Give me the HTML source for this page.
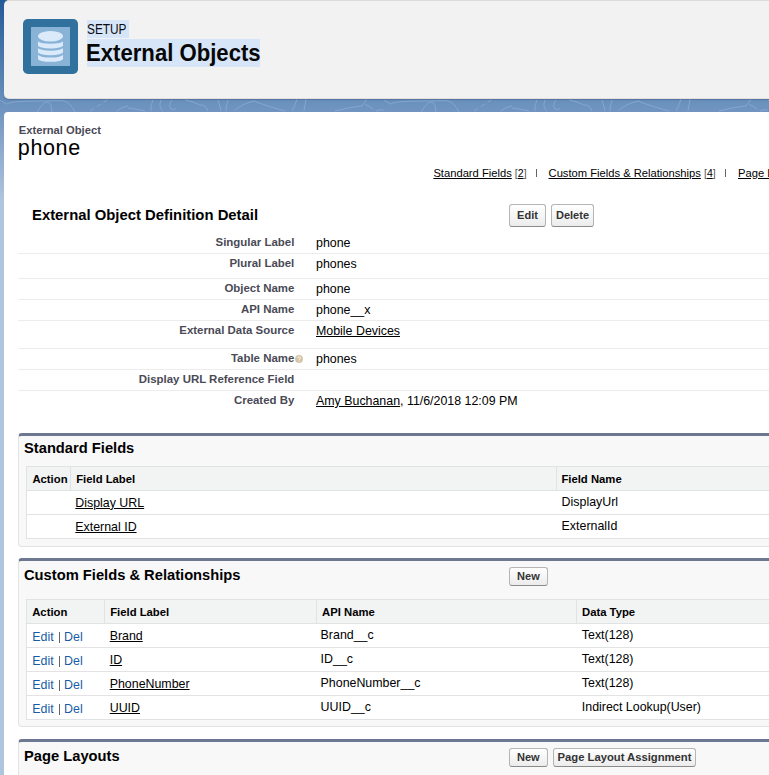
<!DOCTYPE html>
<html><head><meta charset="utf-8">
<style>
html,body{margin:0;padding:0;}
body{width:769px;height:775px;overflow:hidden;position:relative;font-family:"Liberation Sans",sans-serif;background:linear-gradient(180deg,#225a99 0px,#3366a0 22px,#4c7bad 62px,#6b91bd 104px,#8fabcf 152px,#afc4de 200px,#afc4de 775px);}
.a{position:absolute;white-space:nowrap;}
#hdr{position:absolute;left:4px;top:0;width:800px;height:98.5px;background:#f2f2f2;border-radius:5px;border-top:1px solid #dedbd9;border-bottom:1px solid #e2dfdc;box-sizing:border-box;box-shadow:0 1px 1px rgba(20,40,80,0.25);}
#card{position:absolute;left:4px;top:111.8px;width:800px;height:700px;background:#fff;border-radius:4px;}
.sel{position:absolute;background:#d6e5f7;}
.lbl{position:absolute;white-space:nowrap;font-weight:bold;font-size:11.45px;line-height:11.3px;color:#4a4a56;text-align:right;}
.val{position:absolute;white-space:nowrap;font-size:12.4px;line-height:12.4px;color:#000;left:316px;}
.sep{position:absolute;left:18px;width:760px;height:1px;background:#ececec;}
.btn{position:absolute;box-sizing:border-box;border:1px solid #b5b5b5;border-bottom-color:#8a8a8a;border-radius:3px;background:linear-gradient(#ffffff,#ececec);font-weight:bold;font-size:11px;color:#333;text-align:center;}
.box{position:absolute;left:18px;width:770px;box-sizing:border-box;background:#f8f8f8;border:1px solid #e3e3e3;border-top:3px solid #6c7791;border-radius:4px;}
.ttl{position:absolute;white-space:nowrap;font-weight:bold;font-size:16px;line-height:16px;color:#000;left:24.3px;transform:scale(0.919,0.96);transform-origin:0 0;}
.tbl{position:absolute;left:26px;width:760px;box-sizing:border-box;background:#fff;border:1px solid #e0e3e5;}
.th{position:absolute;left:0;right:0;background:#f2f3f3;border-bottom:1px solid #e0e3e5;}
.rl{position:absolute;left:0;right:0;height:1px;background:#e3e3e3;}
.cs{position:absolute;width:1px;background:#e0e3e5;}
.h{position:absolute;white-space:nowrap;font-weight:bold;font-size:11.3px;line-height:11.3px;color:#000;}
.d{position:absolute;white-space:nowrap;font-size:12.4px;line-height:12.4px;color:#000;}
.u{text-decoration:underline;}
.lk{color:#1a5ba6;}
.bar{color:#555;display:inline-block;width:1px;height:11px;background:#666;vertical-align:-1.8px;color:transparent;overflow:hidden;margin:0 0.6px 0 1.9px;}
.bar2{display:inline-block;width:1px;height:8.2px;background:#666;color:transparent;overflow:hidden;vertical-align:0;}
.br{color:#555;}
</style></head><body>
<svg class="a" style="left:0;top:97px" width="769" height="16"><defs><pattern id="tx" x="0" y="0" width="384" height="16" patternUnits="userSpaceOnUse"><g fill="none" stroke="#90b0d4" stroke-width="0.9" opacity="0.75">
<path d="M0,3.3 L6.7,7 Q10,5 20,4.5 T63,3.7 Q70,5 75,15"/><path d="M37.5,15 Q42,5 48,5 Q52,6 51.7,15"/><path d="M90,14 L108,2.5" stroke-dasharray="5 3"/><path d="M116.7,14 Q122,10 128,9"/>
<path d="M128,10.8 Q135,12 145,14"/><path d="M153,3 Q150,9 151,14"/><path d="M161,3 Q158,10 163,14"/><path d="M172,3 Q168,8 171,12 Q174,14 176,11"/><path d="M185,3 Q195,5 200,8 Q205,7 208,14"/><path d="M218,3 Q220,9 221,14"/><path d="M228,3 Q226,9 226,14"/><path d="M235,13 Q245,5 256,4"/>
<path d="M256,5 Q270,10 285,14"/><path d="M297,2 Q295,9 292,14"/><path d="M306,2 Q305,8 304,14"/><path d="M335,14 Q350,10 362,9 Q365,5 367,2"/><path d="M365,7 Q370,10 373,12"/><path d="M376,14 Q380,12 384,13"/>
</g></pattern></defs><rect width="769" height="16" fill="url(#tx)"/></svg>
<div id="hdr"></div>
<svg class="a" style="left:23px;top:19px" width="55" height="55" viewBox="23 19 55 55">
<rect x="23" y="19" width="55" height="55" rx="4.8" fill="#31719e"/>
<rect x="31" y="27" width="39" height="39" fill="#88b3d6"/>
<g fill="#dbeafa">
<path d="M38,41 A12.5,2.8 0 0 0 63,41 V45.2 A12.5,3.3 0 0 1 38,45.2 Z"/>
<path d="M38,47.8 A12.5,2.9 0 0 0 63,47.8 V52 A12.5,3.2 0 0 1 38,52 Z"/>
<path d="M38,54.6 A12.5,2.9 0 0 0 63,54.6 V58.8 A12.5,3 0 0 1 38,58.8 Z"/>
<ellipse cx="50.5" cy="36.2" rx="12.5" ry="5.2"/>
</g>
</svg>
<div class="sel" style="left:87px;top:20px;width:42px;height:18px"></div>
<div class="sel" style="left:87px;top:39px;width:173px;height:28px"></div>
<div class="a" style="left:86.5px;top:22.3px;font-size:14px;line-height:14px;color:#0a0a12;transform:scaleX(0.845);transform-origin:0 0">SETUP</div>
<div class="a" style="left:86.4px;top:40.9px;font-size:23.8px;line-height:23.8px;font-weight:bold;color:#080707;transform:scaleX(0.93);transform-origin:0 0">External Objects</div>

<div id="card"></div>
<div class="a" style="left:18.8px;top:125px;font-size:11.2px;line-height:11.2px;font-weight:bold;color:#4a4a56">External Object</div>
<div class="a" style="left:17.8px;top:137.6px;font-size:21.5px;line-height:21.5px;color:#000;letter-spacing:0.65px">phone</div>

<div class="a" style="left:433.4px;top:167.8px;font-size:11.2px;line-height:11.2px;color:#000"><span class="u">Standard Fields</span> <span style="font-size:10.5px"><span class="br">[</span><span class="u">2</span><span class="br">]</span></span><span style="display:inline-block;width:9px"></span><span class="bar2">|</span><span style="display:inline-block;width:12px"></span><span class="u">Custom Fields &amp; Relationships</span> <span style="font-size:10.5px"><span class="br">[</span><span class="u">4</span><span class="br">]</span></span><span style="display:inline-block;width:9px"></span><span class="bar2">|</span><span style="display:inline-block;width:12.3px"></span><span class="u">Page Layouts</span></div>

<div class="ttl" style="left:31.5px;top:207.9px;font-size:16px;transform:scale(0.928,0.96)">External Object Definition Detail</div>
<div class="btn" style="left:509px;top:204px;width:37px;height:23px;line-height:21px">Edit</div>
<div class="btn" style="left:551px;top:204px;width:43px;height:23px;line-height:21px">Delete</div>

<div class="lbl" style="right:474.7px;top:236.5px">Singular Label</div>
<div class="val" style="top:237.1px">phone</div>
<div class="sep" style="top:253px"></div>
<div class="lbl" style="right:474.7px;top:258px">Plural Label</div>
<div class="val" style="top:257.8px">phones</div>
<div class="sep" style="top:278px"></div>
<div class="lbl" style="right:474.7px;top:282.9px">Object Name</div>
<div class="val" style="top:282.7px">phone</div>
<div class="sep" style="top:299px"></div>
<div class="lbl" style="right:474.7px;top:304px">API Name</div>
<div class="val" style="top:303.8px">phone__x</div>
<div class="sep" style="top:320px"></div>
<div class="lbl" style="right:474.7px;top:325px">External Data Source</div>
<div class="val u" style="top:324.9px">Mobile Devices</div>
<div class="sep" style="top:348px"></div>
<div class="lbl" style="right:474.7px;top:352.9px">Table Name</div>
<svg class="a" style="left:295px;top:354.6px" width="8" height="8"><circle cx="4" cy="4" r="3.9" fill="#d4c3a5"/><path d="M2.6,3.1 Q2.7,1.8 4,1.8 Q5.4,1.8 5.4,3 Q5.4,3.8 4.4,4.2 L4.2,5" stroke="#f4ede2" stroke-width="1.1" fill="none"/><rect x="3.6" y="5.6" width="1.1" height="1.1" fill="#f4ede2"/></svg>
<div class="val" style="top:352.8px">phones</div>
<div class="sep" style="top:369px"></div>
<div class="lbl" style="right:474.7px;top:374px">Display URL Reference Field</div>
<div class="sep" style="top:390px"></div>
<div class="lbl" style="right:474.7px;top:395.1px">Created By</div>
<div class="val" style="top:395px"><span class="u">Amy Buchanan</span>, 11/6/2018 12:09 PM</div>

<!-- Standard Fields -->
<div class="box" style="top:433px;height:114px"></div>
<div class="ttl" style="top:440.5px">Standard Fields</div>
<div class="tbl" style="top:466px;height:73px">
  <div class="th" style="top:0;height:23px"></div>
  <div class="rl" style="top:47px"></div>
  <div class="cs" style="left:43px;top:0;height:24px"></div>
  <div class="cs" style="left:529px;top:0;height:24px"></div>
</div>
<div class="h" style="left:32.4px;top:473.8px">Action</div>
<div class="h" style="left:76.2px;top:473.8px">Field Label</div>
<div class="h" style="left:561.4px;top:473.8px">Field Name</div>
<div class="d u" style="left:75.3px;top:496.8px">Display URL</div>
<div class="d" style="left:561.6px;top:495.9px">DisplayUrl</div>
<div class="d u" style="left:75.3px;top:520.9px">External ID</div>
<div class="d" style="left:561.6px;top:520px">ExternalId</div>

<!-- Custom Fields -->
<div class="box" style="top:558px;height:169px"></div>
<div class="ttl" style="top:568px">Custom Fields &amp; Relationships</div>
<div class="btn" style="left:509px;top:567px;width:38.8px;height:18.8px;line-height:16.8px">New</div>
<div class="tbl" style="top:599px;height:121px">
  <div class="th" style="top:0;height:23px"></div>
  <div class="rl" style="top:47px"></div>
  <div class="rl" style="top:71px"></div>
  <div class="rl" style="top:95px"></div>
  <div class="cs" style="left:77px;top:0;height:24px"></div>
  <div class="cs" style="left:289px;top:0;height:24px"></div>
  <div class="cs" style="left:549px;top:0;height:24px"></div>
</div>
<div class="h" style="left:32.2px;top:607.1px">Action</div>
<div class="h" style="left:110.2px;top:607.1px">Field Label</div>
<div class="h" style="left:322px;top:607.1px">API Name</div>
<div class="h" style="left:582px;top:607.1px">Data Type</div>

<div class="d" style="left:32.3px;top:631.1px"><span class="lk">Edit</span> <span class="bar">|</span> <span class="lk">Del</span></div>
<div class="d u" style="left:109.7px;top:630.2px">Brand</div>
<div class="d" style="left:320.6px;top:628.9px">Brand__c</div>
<div class="d" style="left:581.8px;top:628.9px">Text(128)</div>

<div class="d" style="left:32.3px;top:655.1px"><span class="lk">Edit</span> <span class="bar">|</span> <span class="lk">Del</span></div>
<div class="d u" style="left:109.7px;top:654.2px">ID</div>
<div class="d" style="left:320.6px;top:652.9px">ID__c</div>
<div class="d" style="left:581.8px;top:652.9px">Text(128)</div>

<div class="d" style="left:32.3px;top:679.1px"><span class="lk">Edit</span> <span class="bar">|</span> <span class="lk">Del</span></div>
<div class="d u" style="left:109.7px;top:678.2px">PhoneNumber</div>
<div class="d" style="left:320.6px;top:676.9px">PhoneNumber__c</div>
<div class="d" style="left:581.8px;top:676.9px">Text(128)</div>

<div class="d" style="left:32.3px;top:703.1px"><span class="lk">Edit</span> <span class="bar">|</span> <span class="lk">Del</span></div>
<div class="d u" style="left:109.7px;top:702.2px">UUID</div>
<div class="d" style="left:320.6px;top:700.9px">UUID__c</div>
<div class="d" style="left:581.8px;top:700.9px">Indirect Lookup(User)</div>

<!-- Page Layouts -->
<div class="box" style="top:739px;height:60px"></div>
<div class="ttl" style="top:748.8px">Page Layouts</div>
<div class="btn" style="left:509px;top:748px;width:38.5px;height:18.5px;line-height:16.5px">New</div>
<div class="btn" style="left:553px;top:748px;width:143px;height:18.5px;line-height:16.5px;font-size:11.25px">Page Layout Assignment</div>
</body></html>
